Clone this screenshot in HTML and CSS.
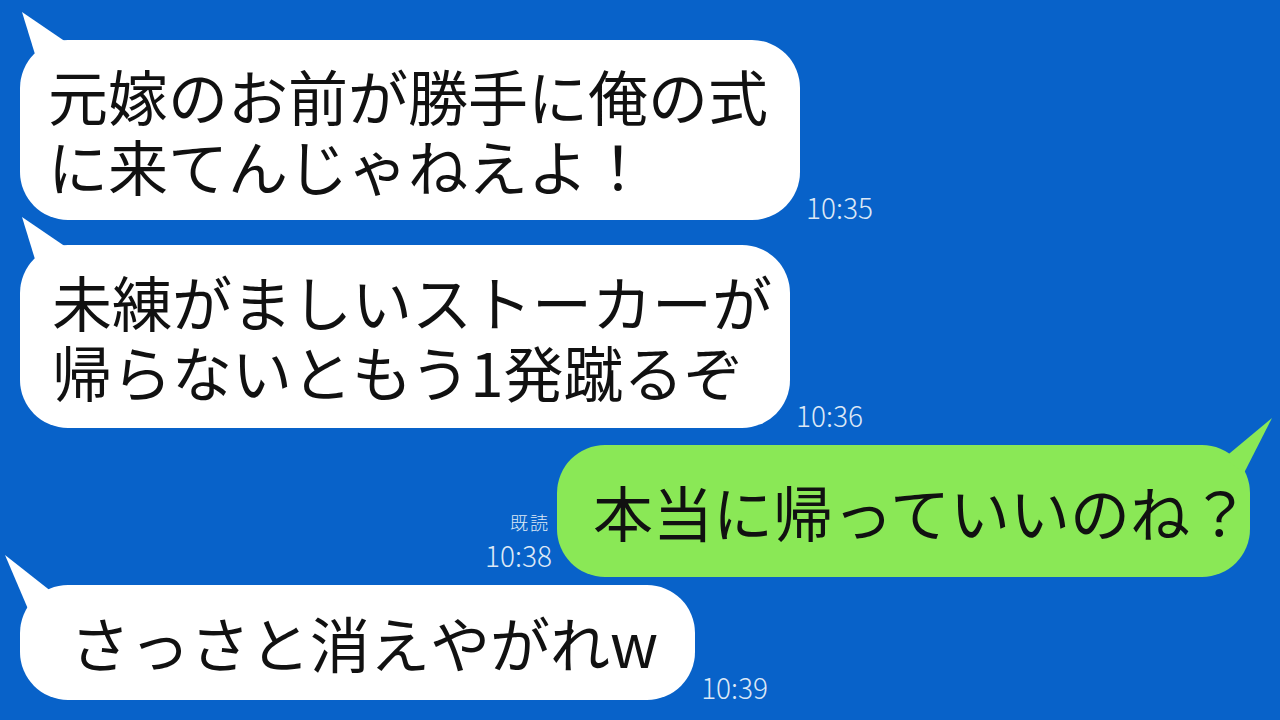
FILE: index.html
```html
<!DOCTYPE html>
<html lang="ja">
<head>
    <meta charset="UTF-8">
    <meta name="viewport" content="width=device-width, initial-scale=1.0">
    <title>トーク</title>
    <link rel="stylesheet" href="styles.css">
</head>
<body>

    <div class="chat">
        <div class="row row-1">
            <div class="bubble left">
                <span class="line">元嫁のお前が勝手に俺の式</span>
                <span class="line">に来てんじゃねえよ！</span>
            </div>
            <div class="meta"><span class="time">10:35</span></div>
        </div>

        <div class="row row-2">
            <div class="bubble left">
                <span class="line">未練がましいストーカーが</span>
                <span class="line">帰らないともう1発蹴るぞ</span>
            </div>
            <div class="meta"><span class="time">10:36</span></div>
        </div>

        <div class="row row-3 mine">
            <div class="meta">
                <span class="read">既読</span>
                <span class="time">10:38</span>
            </div>
            <div class="bubble right">
                <span class="line">本当に帰っていいのね？</span>
            </div>
        </div>

        <div class="row row-4">
            <div class="bubble left">
                <span class="line">さっさと消えやがれw</span>
            </div>
            <div class="meta"><span class="time">10:39</span></div>
        </div>
    </div>

</body>
</html>
```

FILE: styles.css
```css
body {
    margin: 0;
    padding: 0;
    background-color: #0862c9;
    font-family: "Noto Sans CJK JP", "Noto Sans", sans-serif;
    color: #111;
}
.chat {
    width: 1280px;
    height: 720px;
    overflow: hidden;
    display: flex;
    flex-direction: column;
    padding-top: 40px;
    box-sizing: border-box;
}
.row {
    display: flex;
    align-items: flex-end;
    padding: 0 20px;
}
.row-2 {
    margin-top: 25px;
}
.row-3 {
    margin-top: 17px;
}
.row-4 {
    margin-top: 8px;
}
.mine {
    justify-content: flex-end;
    padding-right: 30px;
}
.bubble {
    position: relative;
    background-color: #fff;
    border-radius: 48px;
    font-size: 60px;
    white-space: nowrap;
}
.line {
    display: block;
    height: 70px;
    line-height: 70px;
}
.row-1 .bubble {
    padding: 20px 32px 20px 28px;
}
.row-2 .bubble {
    padding: 21px 18px 22px 32px;
}
.row-4 .bubble {
    padding: 22px 37px 23px 50px;
}
.bubble.right {
    background-color: #8ae856;
    padding: 31px 0 31px 36px;
}
/* tails */
.bubble.left::before {
    content: "";
    position: absolute;
    left: 0;
    top: -28px;
    width: 48px;
    height: 52px;
    background-color: #fff;
    clip-path: polygon(2px 0, 46px 30px, 18px 52px);
}
.row-4 .bubble.left::before {
    left: -16px;
    top: -31px;
    width: 60px;
    height: 64px;
    clip-path: polygon(1px 1px, 48px 38px, 27px 62px);
}
.bubble.right::after {
    content: "";
    position: absolute;
    right: -24px;
    top: -28px;
    width: 50px;
    height: 60px;
    background-color: #8ae856;
    clip-path: polygon(48px 1px, 20px 56px, 0 41px);
}
.meta {
    display: flex;
    flex-direction: column;
    align-items: flex-end;
    margin-left: 6px;
    margin-bottom: -7px;
    color: #dce8f6;
    font-weight: 300;
}
.mine .meta {
    margin-left: 0;
    margin-right: 5px;
    margin-bottom: 2px;
}
.time {
    font-size: 28px;
    line-height: 40px;
}
.read {
    font-size: 18px;
    line-height: 26px;
    letter-spacing: 2px;
    margin-right: 2px;
}
```
